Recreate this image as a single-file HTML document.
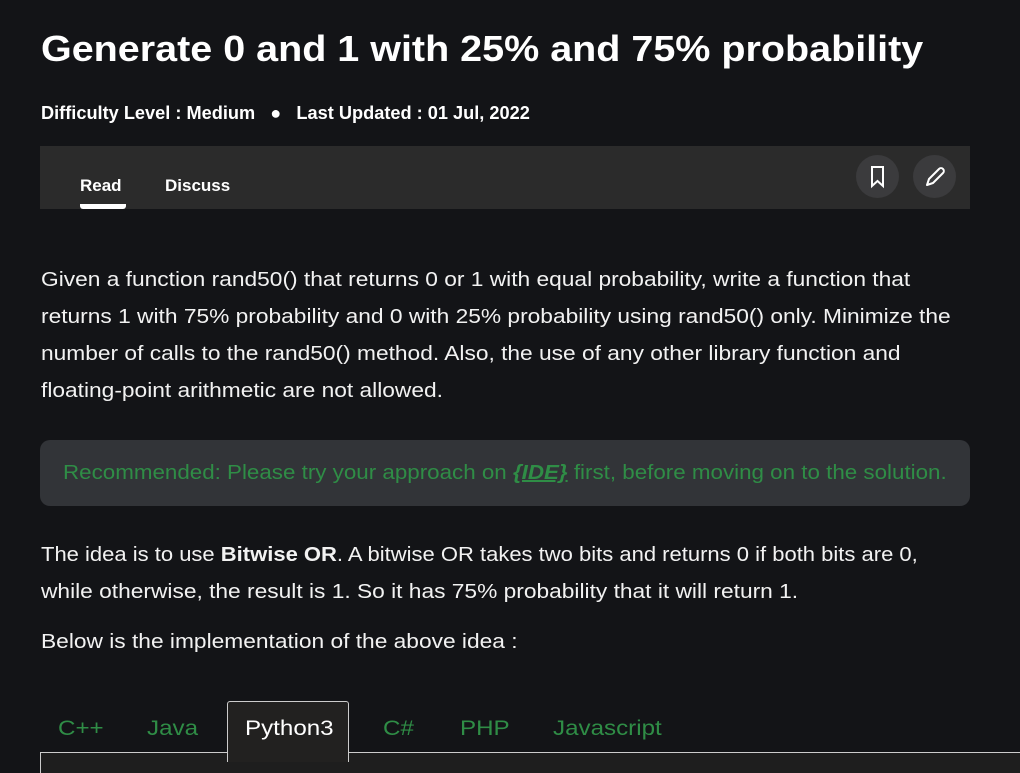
<!DOCTYPE html>
<html><head><meta charset="utf-8"><style>
body{margin:0;background:#131417;width:1020px;height:762px;overflow:hidden;font-family:"Liberation Sans",sans-serif;color:#fff}
.t{position:absolute;left:41px;top:28px;font-size:36px;font-weight:bold;white-space:nowrap;transform:scaleX(1.097);transform-origin:0 50%}
.meta{position:absolute;left:41px;top:103px;font-size:18px;font-weight:bold;white-space:nowrap;transform:scaleX(1.01);transform-origin:0 50%}
.bar{position:absolute;left:40px;top:146px;width:930px;height:63px;background:#2b2b2b}
.tab{position:absolute;top:176px;font-size:17px;font-weight:bold}
.ul{position:absolute;left:80px;top:204px;width:46px;height:5px;background:#fff;border-radius:0 0 3px 3px}
.ic{position:absolute;top:155px;width:43px;height:43px;border-radius:50%;background:#3b3b3d}
.p{position:absolute;left:41px;font-size:20px;white-space:nowrap;color:#f2f2f2;transform:scaleX(1.137);transform-origin:0 50%}
.rec{position:absolute;left:40px;top:440px;width:930px;height:66px;background:#323438;border-radius:10px}
.rec span{position:absolute;left:23px;top:22px;font-size:20px;color:#2f8d46;white-space:nowrap;transform:scaleX(1.118);transform-origin:0 50%}
.lang{position:absolute;top:717px;font-size:21px;color:#2f8d46;transform:scaleX(1.15);transform-origin:0 50%}
</style></head><body>
<div class="t">Generate 0 and 1 with 25% and 75% probability</div>
<div class="meta">Difficulty Level : Medium &nbsp;&nbsp;●&nbsp;&nbsp; Last Updated : 01 Jul, 2022</div>
<div class="bar"></div>
<div class="tab" style="left:80px">Read</div>
<div class="tab" style="left:165px">Discuss</div>
<div class="ul"></div>
<div class="ic" style="left:856px"><svg width="43" height="43" viewBox="0 0 43 43"><path d="M16 12h11v19l-5.5-5-5.5 5z" fill="none" stroke="#fff" stroke-width="2"/></svg></div>
<div class="ic" style="left:913px"><svg width="43" height="43" viewBox="0 0 43 43"><path d="M14 30l2-6 10-10a2.5 2.5 0 0 1 4 4L20 28z" fill="none" stroke="#fff" stroke-width="2" stroke-linejoin="round"/></svg></div>
<div class="p" style="top:269px">Given a function rand50() that returns 0 or 1 with equal probability, write a function that</div>
<div class="p" style="top:306px">returns 1 with 75% probability and 0 with 25% probability using rand50() only. Minimize the</div>
<div class="p" style="top:343px">number of calls to the rand50() method. Also, the use of any other library function and</div>
<div class="p" style="top:380px">floating-point arithmetic are not allowed.</div>
<div class="rec"><span>Recommended: Please try your approach on <b><i><u>{IDE}</u></i></b> first, before moving on to the solution.</span></div>
<div class="p" style="top:544px;transform:scaleX(1.1)">The idea is to use <b>Bitwise OR</b>. A bitwise OR takes two bits and returns 0 if both bits are 0,</div>
<div class="p" style="top:581px">while otherwise, the result is 1. So it has 75% probability that it will return 1.</div>
<div class="p" style="top:631px">Below is the implementation of the above idea :</div>
<div style="position:absolute;left:40px;top:752px;width:980px;height:20px;border-top:1.5px solid #ccc;border-left:1.5px solid #ccc;background:#1e1e1e"></div>
<div style="position:absolute;left:227px;top:701px;width:120px;height:60px;border:1.5px solid #ccc;border-bottom:none;border-radius:3px 3px 0 0;background:#222120"></div>
<div class="lang" style="left:58px">C++</div>
<div class="lang" style="left:147px">Java</div>
<div class="lang" style="left:245px;color:#fff">Python3</div>
<div class="lang" style="left:383px">C#</div>
<div class="lang" style="left:460px">PHP</div>
<div class="lang" style="left:553px">Javascript</div>
</body></html>
